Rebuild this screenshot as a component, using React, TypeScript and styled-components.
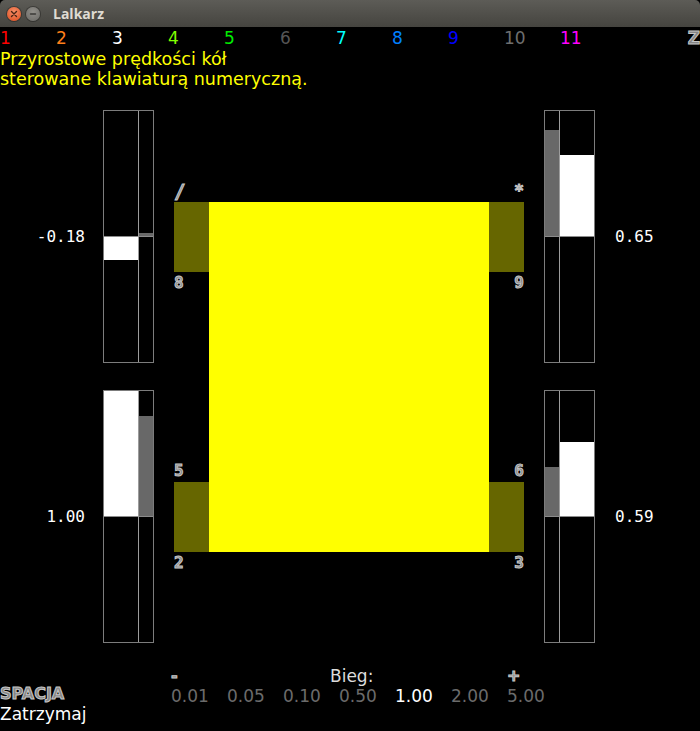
import React from "react";
import styled, { createGlobalStyle } from "styled-components";

const Global = createGlobalStyle`
  html, body { margin: 0; padding: 0; background: #000; }
  body { width: 700px; height: 731px; overflow: hidden; }
`;

const Window = styled.div`
  width: 700px;
  height: 731px;
  background: #000;
  display: flex;
  flex-direction: column;
  font-family: "DejaVu Sans", sans-serif;
  overflow: hidden;
`;

const TitleBar = styled.div`
  height: 27px;
  flex: none;
  display: flex;
  align-items: center;
  padding-left: 7px;
  gap: 5px;
  background: linear-gradient(#5d5c57, #45443f);
  border-radius: 5px 5px 0 0;
`;

const WinButton = styled.div<{ $kind: "close" | "min" }>`
  width: 14px;
  height: 14px;
  border-radius: 50%;
  display: flex;
  align-items: center;
  justify-content: center;
  background: ${(p) =>
    p.$kind === "close"
      ? "radial-gradient(circle at 50% 35%, #f7906a, #dd4a1b)"
      : "radial-gradient(circle at 50% 35%, #918f8a, #6a6965)"};
  box-shadow: 0 0 0 1px rgba(0, 0, 0, 0.3);
`;

const Title = styled.span`
  margin-left: 8px;
  font-family: "Open Sans", sans-serif;
  font-weight: 700;
  font-size: 14px;
  color: #dfdbd2;
`;

const Outlined = styled.span`
  font-weight: 700;
  color: #858585;
  -webkit-text-stroke: 1px #c6c6c6;
`;

const Legend = styled.div`
  display: flex;
  height: 22px;
  line-height: 22px;
  font-size: 17px;
  flex: none;
`;

const LegendItem = styled.span<{ $color: string }>`
  width: 56px;
  flex: none;
  color: ${(p) => p.$color};
`;

const LegendKey = styled(Outlined)`
  margin-left: auto;
  font-size: 17px;
`;

const Hint = styled.div`
  color: #ffff00;
  font-size: 17.5px;
  line-height: 20px;
  flex: none;
`;

const Stage = styled.div`
  margin-top: 21px;
  height: 533px;
  display: flex;
  align-items: center;
  flex: none;
`;

const GaugeColumn = styled.div`
  display: flex;
  flex-direction: column;
  gap: 27px;
`;

const GaugeRow = styled.div`
  display: flex;
  align-items: center;
`;

const ValueLabel = styled.div<{ $side: "left" | "right" }>`
  font-family: "DejaVu Sans Mono", monospace;
  font-size: 16px;
  color: #fff;
  ${(p) =>
    p.$side === "left"
      ? "width: 85px; margin-right: 18px; text-align: right;"
      : "margin-left: 20px;"}
`;

const GaugeBox = styled.div<{ $mirror: boolean }>`
  display: grid;
  grid-template-columns: ${(p) => (p.$mirror ? "15px 34px" : "34px 15px")};
  width: 51px;
  height: 253px;
  box-sizing: border-box;
  border: 1px solid #7c7c7c;
`;

const Track = styled.div<{ $divider: "left" | "right" | "none" }>`
  display: flex;
  flex-direction: column;
  ${(p) =>
    p.$divider === "left"
      ? "border-left: 1px solid #9c9c9c;"
      : p.$divider === "right"
      ? "border-right: 1px solid #9c9c9c;"
      : ""}
`;

const Half = styled.div<{ $up: boolean }>`
  height: 125px;
  display: flex;
  flex-direction: column;
  justify-content: ${(p) => (p.$up ? "flex-end" : "flex-start")};
`;

const CenterLine = styled.div`
  height: 1px;
  background: #8c8c8c;
`;

const Fill = styled.div<{ $tone: "main" | "aux" }>`
  background: ${(p) => (p.$tone === "main" ? "#ffffff" : "#686868")};
  flex: none;
`;

const Chassis = styled.div`
  margin: 0 20px;
  display: grid;
  grid-template-columns: 35px 280px 35px;
  grid-template-rows: 22px 70px 22px 166px 22px 70px 22px;
`;

const Body = styled.div`
  grid-column: 2;
  grid-row: 2 / 7;
  background: #ffff00;
`;

const Wheel = styled.div<{ $col: number; $row: number }>`
  grid-column: ${(p) => p.$col};
  grid-row: ${(p) => p.$row};
  background: #666600;
`;

const KeyLabel = styled(Outlined)<{ $col: number; $row: number; $big?: boolean }>`
  grid-column: ${(p) => p.$col};
  grid-row: ${(p) => p.$row};
  justify-self: ${(p) => (p.$col === 1 ? "start" : "end")};
  font-family: "DejaVu Sans Mono", monospace;
  font-size: ${(p) => (p.$big ? "19px" : "16px")};
  line-height: 22px;
`;

const Footer = styled.div`
  margin-top: 23px;
  display: grid;
  grid-template-columns: 171px auto;
  flex: none;
`;

const Brake = styled.div`
  padding-top: 18px;
  display: flex;
  flex-direction: column;
  align-items: flex-start;
`;

const BrakeKey = styled(Outlined)`
  font-size: 16px;
  line-height: 20px;
`;

const BrakeText = styled.div`
  color: #fff;
  font-size: 17px;
  line-height: 20px;
`;

const Gear = styled.div`
  display: grid;
  grid-template-columns: repeat(7, 56px);
  grid-auto-rows: 20px;
  line-height: 20px;
`;

const GearStep = styled(Outlined)<{ $col: number }>`
  grid-column: ${(p) => p.$col};
  grid-row: 1;
  font-size: 16px;
`;

const GearTitle = styled.span`
  grid-column: 3 / span 3;
  grid-row: 1;
  padding-left: 47px;
  color: #dcdcdc;
  font-size: 17px;
`;

const GearValue = styled.span<{ $active: boolean }>`
  grid-row: 2;
  font-size: 17px;
  color: ${(p) => (p.$active ? "#ffffff" : "#6b6b6b")};
`;

const legend = [
  { t: "1", c: "#ff0000" },
  { t: "2", c: "#ff7f1a" },
  { t: "3", c: "#ffffff" },
  { t: "4", c: "#80ff00" },
  { t: "5", c: "#00ee00" },
  { t: "6", c: "#555555" },
  { t: "7", c: "#00ffff" },
  { t: "8", c: "#0080ff" },
  { t: "9", c: "#0000ff" },
  { t: "10", c: "#6e6e6e" },
  { t: "11", c: "#ff00ff" },
];

const HALF = 125;

type GaugeProps = { main: number; aux: number; mirror: boolean };

function TrackView({ value, tone, divider }: { value: number; tone: "main" | "aux"; divider: "left" | "right" | "none" }) {
  const h = Math.round(Math.min(1, Math.abs(value)) * HALF);
  return (
    <Track $divider={divider}>
      <Half $up>{value > 0 && <Fill $tone={tone} style={{ height: h }} />}</Half>
      <CenterLine />
      <Half $up={false}>{value < 0 && <Fill $tone={tone} style={{ height: h }} />}</Half>
    </Track>
  );
}

function Gauge({ main, aux, mirror }: GaugeProps) {
  return (
    <GaugeBox $mirror={mirror}>
      {mirror ? (
        <>
          <TrackView value={aux} tone="aux" divider="right" />
          <TrackView value={main} tone="main" divider="none" />
        </>
      ) : (
        <>
          <TrackView value={main} tone="main" divider="none" />
          <TrackView value={aux} tone="aux" divider="left" />
        </>
      )}
    </GaugeBox>
  );
}

const gears = ["0.01", "0.05", "0.10", "0.50", "1.00", "2.00", "5.00"];

export default function App() {
  return (
    <>
      <Global />
      <Window>
        <TitleBar>
          <WinButton $kind="close">
            <svg width="8" height="8" viewBox="0 0 8 8">
              <path d="M1.5 1.5 L6.5 6.5 M6.5 1.5 L1.5 6.5" stroke="#4a2414" strokeWidth="1.4" strokeLinecap="round" />
            </svg>
          </WinButton>
          <WinButton $kind="min">
            <svg width="8" height="8" viewBox="0 0 8 8">
              <path d="M1.5 4 L6.5 4" stroke="#3a3936" strokeWidth="1.4" strokeLinecap="round" />
            </svg>
          </WinButton>
          <Title>Lalkarz</Title>
        </TitleBar>

        <Legend>
          {legend.map((l) => (
            <LegendItem key={l.t} $color={l.c}>
              {l.t}
            </LegendItem>
          ))}
          <LegendKey>Z</LegendKey>
        </Legend>

        <Hint>
          Przyrostowe prędkości kół
          <br />
          sterowane klawiaturą numeryczną.
        </Hint>

        <Stage>
          <GaugeColumn>
            <GaugeRow>
              <ValueLabel $side="left">-0.18</ValueLabel>
              <Gauge main={-0.18} aux={0.02} mirror={false} />
            </GaugeRow>
            <GaugeRow>
              <ValueLabel $side="left">1.00</ValueLabel>
              <Gauge main={1} aux={0.8} mirror={false} />
            </GaugeRow>
          </GaugeColumn>

          <Chassis>
            <KeyLabel $col={1} $row={1} $big>/</KeyLabel>
            <KeyLabel $col={3} $row={1}>*</KeyLabel>
            <Wheel $col={1} $row={2} />
            <Wheel $col={3} $row={2} />
            <KeyLabel $col={1} $row={3}>8</KeyLabel>
            <KeyLabel $col={3} $row={3}>9</KeyLabel>
            <KeyLabel $col={1} $row={5}>5</KeyLabel>
            <KeyLabel $col={3} $row={5}>6</KeyLabel>
            <Wheel $col={1} $row={6} />
            <Wheel $col={3} $row={6} />
            <KeyLabel $col={1} $row={7}>2</KeyLabel>
            <KeyLabel $col={3} $row={7}>3</KeyLabel>
            <Body />
          </Chassis>

          <GaugeColumn>
            <GaugeRow>
              <Gauge main={0.65} aux={0.85} mirror />
              <ValueLabel $side="right">0.65</ValueLabel>
            </GaugeRow>
            <GaugeRow>
              <Gauge main={0.59} aux={0.39} mirror />
              <ValueLabel $side="right">0.59</ValueLabel>
            </GaugeRow>
          </GaugeColumn>
        </Stage>

        <Footer>
          <Brake>
            <BrakeKey>SPACJA</BrakeKey>
            <BrakeText>Zatrzymaj</BrakeText>
          </Brake>
          <Gear>
            <GearStep $col={1}>-</GearStep>
            <GearTitle>Bieg:</GearTitle>
            <GearStep $col={7}>+</GearStep>
            {gears.map((g) => (
              <GearValue key={g} $active={g === "1.00"}>
                {g}
              </GearValue>
            ))}
          </Gear>
        </Footer>
      </Window>
    </>
  );
}
